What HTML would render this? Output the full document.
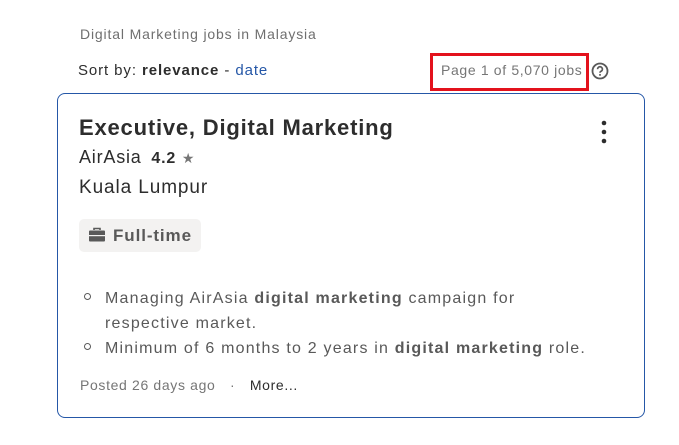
<!DOCTYPE html><html><head><style>
*{margin:0;padding:0;box-sizing:border-box}
body{width:679px;height:445px;background:#fff;font-family:"Liberation Sans",sans-serif;position:relative;overflow:hidden;color:#2d2d2d}
.a{position:absolute;white-space:nowrap}
</style></head><body>
<div class="a" style="left:80px;top:26px;font-size:14px;color:#6f6f6f;letter-spacing:0.85px">Digital Marketing jobs in Malaysia</div>
<div class="a" style="left:78px;top:62px;font-size:15px;color:#2d2d2d;letter-spacing:0.9px">Sort by: <b>relevance</b> - <span style="color:#2557a7">date</span></div>
<div class="a" style="left:430px;top:53px;width:159px;height:38px;border:3px solid #e3121c"></div>
<div class="a" style="left:441px;top:62px;font-size:14px;color:#767676;letter-spacing:0.65px">Page 1 of 5,070 jobs</div>
<svg class="a" style="left:591px;top:62px" width="18" height="18" viewBox="0 0 18 18"><circle cx="9" cy="9" r="7.5" fill="none" stroke="#595959" stroke-width="1.8"/><path d="M6.6 7.2a2.4 2.4 0 1 1 3.2 2.2c-.6.3-.8.7-.8 1.3" fill="none" stroke="#595959" stroke-width="1.7"/><circle cx="9" cy="12.9" r="1" fill="#595959"/></svg>
<div class="a" style="left:57px;top:93px;width:588px;height:325px;border:1px solid #2557a7;border-radius:8px"></div>
<div class="a" style="left:79px;top:115px;font-size:22px;font-weight:bold;color:#2d2d2d;letter-spacing:0.8px">Executive, Digital Marketing</div>
<svg class="a" style="left:598px;top:119px" width="12" height="26"><circle cx="6" cy="4" r="2.3" fill="#2d2d2d"/><circle cx="6" cy="13" r="2.3" fill="#2d2d2d"/><circle cx="6" cy="22" r="2.3" fill="#2d2d2d"/></svg>
<div class="a" style="left:79px;top:147px;font-size:18px;color:#2d2d2d;letter-spacing:0.8px">AirAsia <b style="font-size:16px;margin-left:4px">4.2</b> <span style="font-size:14px;color:#767676">★</span></div>
<div class="a" style="left:79px;top:177px;font-size:19px;color:#2d2d2d;letter-spacing:0.9px">Kuala Lumpur</div>
<div class="a" style="left:79px;top:219px;width:122px;height:33px;background:#f3f2f1;border-radius:5px"></div>
<svg class="a" style="left:88px;top:227px" width="18" height="16" viewBox="0 0 18 16"><path d="M6 3V1.5h6V3" fill="none" stroke="#595959" stroke-width="1.6"/><rect x="1" y="3.5" width="16" height="11" rx="1" fill="#595959"/><rect x="1" y="8" width="16" height="1.2" fill="#f3f2f1"/></svg>
<div class="a" style="left:113px;top:226px;font-size:17px;font-weight:bold;color:#595959;letter-spacing:0.9px">Full-time</div>
<div class="a" style="left:105px;top:286px;font-size:16px;color:#595959;line-height:25px;letter-spacing:1.2px">Managing AirAsia <b>digital marketing</b> campaign for<br>respective market.<br>Minimum of 6 months to 2 years in <b>digital marketing</b> role.</div>
<div class="a" style="left:84px;top:293px;width:7px;height:7px;border:1.3px solid #595959;border-radius:50%"></div>
<div class="a" style="left:84px;top:343px;width:7px;height:7px;border:1.3px solid #595959;border-radius:50%"></div>
<div class="a" style="left:80px;top:377px;font-size:14px;color:#767676;letter-spacing:0.65px">Posted 26 days ago <span style="margin:0 10px">·</span> <span style="color:#2d2d2d">More...</span></div>
</body></html>
